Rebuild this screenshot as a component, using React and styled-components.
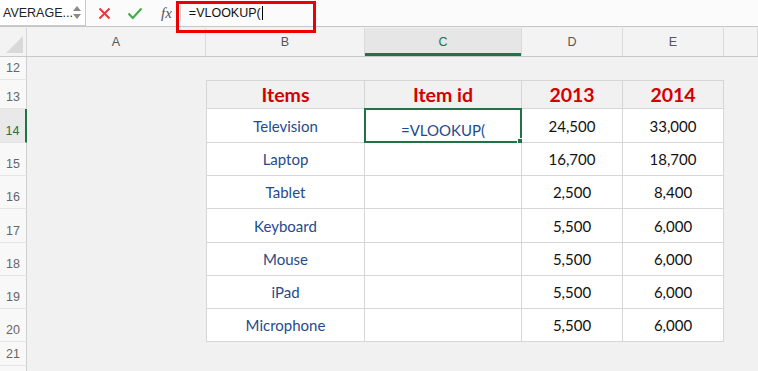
import React from 'react'
import styled, { createGlobalStyle } from 'styled-components'

const GlobalStyle = createGlobalStyle`
  html, body { margin: 0; padding: 0; background: #f1f1f1; }
  body { font-family: "Liberation Sans", Arial, sans-serif; }
`

const COLS = '27px 179px 159px 157px 101px 101px 1fr'

const Page = styled.div`
  width: 758px;
  height: 371px;
  overflow: hidden;
  background: #f1f1f1;
`

const FormulaBar = styled.div`
  position: relative;
  display: flex;
  align-items: center;
  height: 26px;
  background: #fbfbfb;
  border-bottom: 1px solid #c6c6c6;
`

const NameBox = styled.div`
  display: flex;
  align-items: center;
  justify-content: space-between;
  box-sizing: border-box;
  width: 86px;
  height: 26px;
  padding: 0 5px 0 3px;
  border: 1px solid #c9c9c9;
  border-top: none;
  border-left: none;
  background: #fff;
  font-size: 12.5px;
  color: #222;
`

const Stepper = styled.div`
  display: flex;
  flex-direction: column;
  gap: 3px;
`

const Arrow = styled.span`
  width: 0;
  height: 0;
  border-left: 4px solid transparent;
  border-right: 4px solid transparent;
  ${p => (p.$down ? 'border-top: 5px solid #8a8a8a;' : 'border-bottom: 5px solid #8a8a8a;')}
`

const Tools = styled.div`
  display: flex;
  align-items: center;
  gap: 16px;
  margin-left: 12px;
  height: 100%;
`

const Fx = styled.span`
  font-family: "Liberation Serif", "Times New Roman", serif;
  font-style: italic;
  font-size: 15px;
  color: #555;
  margin-left: 2px;
`

const Divider = styled.span`
  width: 1px;
  height: 16px;
  background: #d8d8d8;
  margin-left: 8px;
`

const FormulaText = styled.div`
  display: flex;
  align-items: center;
  margin-left: 8px;
  font-size: 12.5px;
  color: #111;
`

const Caret = styled.span`
  display: inline-block;
  width: 1px;
  height: 14px;
  background: #000;
  margin-left: 1px;
`

const Highlight = styled.div`
  position: absolute;
  left: 176px;
  top: 1px;
  width: 140px;
  height: 32px;
  box-sizing: border-box;
  border: 3.5px solid #ee0000;
  z-index: 5;
`

const Row = styled.div`
  display: grid;
  grid-template-columns: ${COLS};
  height: ${p => p.$h}px;
`

const HeaderRow = styled(Row)`
  margin-top: 1px;
  background: #f3f3f3;
  border-bottom: 1px solid #c8c8c8;
  box-sizing: border-box;
`

const Corner = styled.div`
  position: relative;
  border-right: 1px solid #d6d6d6;
  &::after {
    content: '';
    position: absolute;
    right: 3px;
    bottom: 3px;
    border-left: 17px solid transparent;
    border-bottom: 17px solid #d9d9d9;
  }
`

const ColHead = styled.div`
  display: flex;
  align-items: center;
  justify-content: center;
  font-size: 12.5px;
  color: ${p => (p.$active ? '#217346' : '#555')};
  background: ${p => (p.$active ? '#e6e6e6' : 'transparent')};
  border-right: 1px solid #dadada;
  box-shadow: ${p => (p.$active ? 'inset 0 -3px 0 #217346' : 'none')};
`

const RowHead = styled.div`
  display: flex;
  align-items: flex-end;
  justify-content: center;
  padding-bottom: 4px;
  box-sizing: border-box;
  font-size: 12.5px;
  color: ${p => (p.$active ? '#217346' : '#666')};
  background: ${p => (p.$active ? '#e9e9e9' : '#f8f8f8')};
  border-right: ${p => (p.$active ? '2px solid #217346' : '1px solid #d0d0d0')};
  border-bottom: 1px solid #e4e4e4;
`

const Blank = styled.div``

const Cell = styled.div`
  position: relative;
  display: flex;
  align-items: center;
  justify-content: center;
  box-sizing: border-box;
  font-family: Lato, "Open Sans", sans-serif;
  font-size: ${p => (p.$head ? '19.5px' : '15px')};
  font-weight: ${p => (p.$head ? 700 : 400)};
  color: ${p => (p.$head ? '#d40000' : p.$num ? '#111' : '#1f4b8c')};
  background: ${p => (p.$head ? '#f1f1f1' : '#fff')};
  border-right: 1px solid #d6d6d6;
  border-bottom: 1px solid #d6d6d6;
  ${p => p.$first && 'border-left: 1px solid #d6d6d6;'}
  ${p => p.$top && 'border-top: 1px solid #d6d6d6;'}
`

const Selected = styled.div`
  position: absolute;
  inset: -1px -1px -1px -1px;
  border: 2px solid #217346;
  display: flex;
  align-items: center;
  justify-content: center;
  padding-top: 8px;
  box-sizing: border-box;
  &::after {
    content: '';
    position: absolute;
    right: -4px;
    bottom: -4px;
    width: 5px;
    height: 5px;
    background: #217346;
    border: 1px solid #fff;
  }
`

const data = [
  ['Television', '24,500', '33,000'],
  ['Laptop', '16,700', '18,700'],
  ['Tablet', '2,500', '8,400'],
  ['Keyboard', '5,500', '6,000'],
  ['Mouse', '5,500', '6,000'],
  ['iPad', '5,500', '6,000'],
  ['Microphone', '5,500', '6,000'],
]

const heights = [34, 33, 33, 34, 33, 33, 33]

const App = () => (
  <Page>
    <GlobalStyle />
    <FormulaBar>
      <NameBox>
        AVERAGE...
        <Stepper>
          <Arrow />
          <Arrow $down />
        </Stepper>
      </NameBox>
      <Tools>
        <svg width="13" height="13" viewBox="0 0 13 13">
          <path d="M1.5 1.5 L11.5 11.5 M11.5 1.5 L1.5 11.5" stroke="#e0393e" strokeWidth="2" />
        </svg>
        <svg width="16" height="13" viewBox="0 0 16 13">
          <path d="M1.5 6.5 L5.8 11 L14.5 1.5" stroke="#3fae49" strokeWidth="2.2" fill="none" />
        </svg>
        <Fx>fx</Fx>
      </Tools>
      <Divider />
      <FormulaText>
        =VLOOKUP(
        <Caret />
      </FormulaText>
      <Highlight />
    </FormulaBar>

    <HeaderRow $h={29}>
      <Corner />
      <ColHead>A</ColHead>
      <ColHead>B</ColHead>
      <ColHead $active>C</ColHead>
      <ColHead>D</ColHead>
      <ColHead>E</ColHead>
      <ColHead />
    </HeaderRow>

    <Row $h={23}>
      <RowHead>12</RowHead>
    </Row>
    <Row $h={29}>
      <RowHead>13</RowHead>
      <Blank />
      <Cell $head $first $top>Items</Cell>
      <Cell $head $top>Item id</Cell>
      <Cell $head $top>2013</Cell>
      <Cell $head $top>2014</Cell>
    </Row>
    {data.map(([name, a, b], i) => (
      <Row key={name} $h={heights[i]}>
        <RowHead $active={i === 0}>{14 + i}</RowHead>
        <Blank />
        <Cell $first>{name}</Cell>
        <Cell>{i === 0 && <Selected>=VLOOKUP(</Selected>}</Cell>
        <Cell $num>{a}</Cell>
        <Cell $num>{b}</Cell>
      </Row>
    ))}
    <Row $h={24}>
      <RowHead>21</RowHead>
    </Row>
    <Row $h={24}>
      <RowHead>22</RowHead>
    </Row>
  </Page>
)

export default App
